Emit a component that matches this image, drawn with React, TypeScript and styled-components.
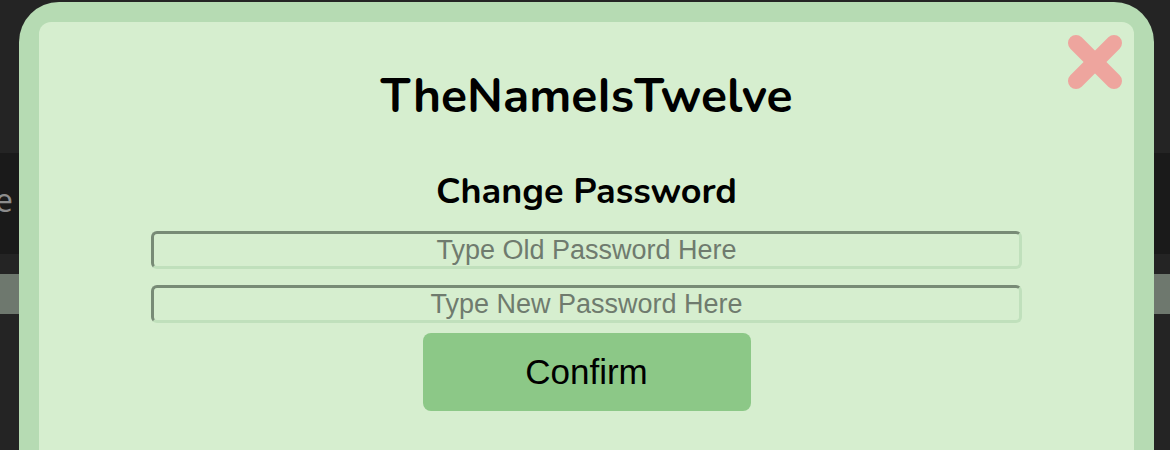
import styled, { createGlobalStyle } from "styled-components";

const GlobalStyle = createGlobalStyle`
    html, body {
        margin: 0;
        padding: 0;
        background-color: #242424;
        overflow: hidden;
    }
    #root {
        min-height: 450px;
    }
`;

const Page = styled.div`
    display: flex;
    flex-direction: column;
    height: 450px;
    background-color: #242424;
    padding-top: 153px;
    box-sizing: border-box;
`;

const NavBar = styled.nav`
    height: 101px;
    background-color: #1a1a1a;
    display: flex;
    align-items: center;
    font-family: "Open Sans", "Liberation Sans", sans-serif;
    font-size: 32px;
    color: #8c8c8c;
    overflow: hidden;
`;

const NavLabel = styled.span`
    margin-left: -5px;
    margin-top: -8px;
`;

const StripeBar = styled.div`
    margin-top: 20px;
    height: 40px;
    background-color: #6e786e;
`;

const ModalFrame = styled.div`
    position: fixed;
    top: 2px;
    left: 19px;
    width: 1135px;
    height: 520px;
    background-color: #b6dbb3;
    border-radius: 40px;
    padding: 20px;
    box-sizing: border-box;
`;

const ModalBody = styled.div`
    position: relative;
    height: 100%;
    background-color: #d6eecf;
    border-radius: 12px;
    display: flex;
    flex-direction: column;
    align-items: center;
    padding-top: 45px;
    box-sizing: border-box;
`;

const CloseButton = styled.button`
    position: absolute;
    top: 12px;
    right: 11px;
    width: 56px;
    height: 56px;
    padding: 0;
    border: none;
    background: none;
    cursor: pointer;
`;

const Title = styled.h1`
    margin: 0;
    font-family: "Nunito", "Lato", "Noto Sans", sans-serif;
    font-weight: 700;
    font-size: 48px;
    line-height: 58px;
    color: #000;
`;

const SubTitle = styled.h2`
    margin: 45px 0 0 0;
    font-family: "Nunito", "Lato", "Noto Sans", sans-serif;
    font-weight: 700;
    font-size: 36px;
    line-height: 44px;
    color: #000;
`;

const PasswordForm = styled.form`
    display: flex;
    flex-direction: column;
    align-items: center;
    gap: 16px;
    margin-top: 17px;
    width: 100%;
`;

const PasswordInput = styled.input`
    width: 871px;
    height: 38px;
    box-sizing: border-box;
    border: 3px solid;
    border-color: #788b76 #c0e0bc #c0e0bc #788b76;
    border-radius: 6px;
    background-color: #d6eecf;
    font-family: "Liberation Sans", Arial, sans-serif;
    font-size: 27px;
    text-align: center;
    color: #333;
    padding: 0;
    outline: none;

    &::placeholder {
        color: #6f7b6e;
    }
`;

const ConfirmButton = styled.button`
    width: 328px;
    height: 78px;
    margin-top: -6px;
    border: none;
    border-radius: 8px;
    background-color: #8cc887;
    font-family: "Liberation Sans", Arial, sans-serif;
    font-size: 35px;
    color: #000;
    cursor: pointer;
`;

const CloseIcon = () => (
    <svg width="56" height="56" viewBox="0 0 56 56">
        <g stroke="#eea59e" strokeWidth="16" strokeLinecap="round">
            <line x1="9" y1="9" x2="47" y2="47" />
            <line x1="47" y1="9" x2="9" y2="47" />
        </g>
    </svg>
);

export default function App() {
    return (
        <>
            <GlobalStyle />
            <Page>
                <NavBar>
                    <NavLabel>e</NavLabel>
                </NavBar>
                <StripeBar />
            </Page>
            <ModalFrame>
                <ModalBody>
                    <CloseButton aria-label="Close">
                        <CloseIcon />
                    </CloseButton>
                    <Title>TheNameIsTwelve</Title>
                    <SubTitle>Change Password</SubTitle>
                    <PasswordForm onSubmit={(e) => e.preventDefault()}>
                        <PasswordInput type="password" placeholder="Type Old Password Here" />
                        <PasswordInput type="password" placeholder="Type New Password Here" />
                        <ConfirmButton type="submit">Confirm</ConfirmButton>
                    </PasswordForm>
                </ModalBody>
            </ModalFrame>
        </>
    );
}
